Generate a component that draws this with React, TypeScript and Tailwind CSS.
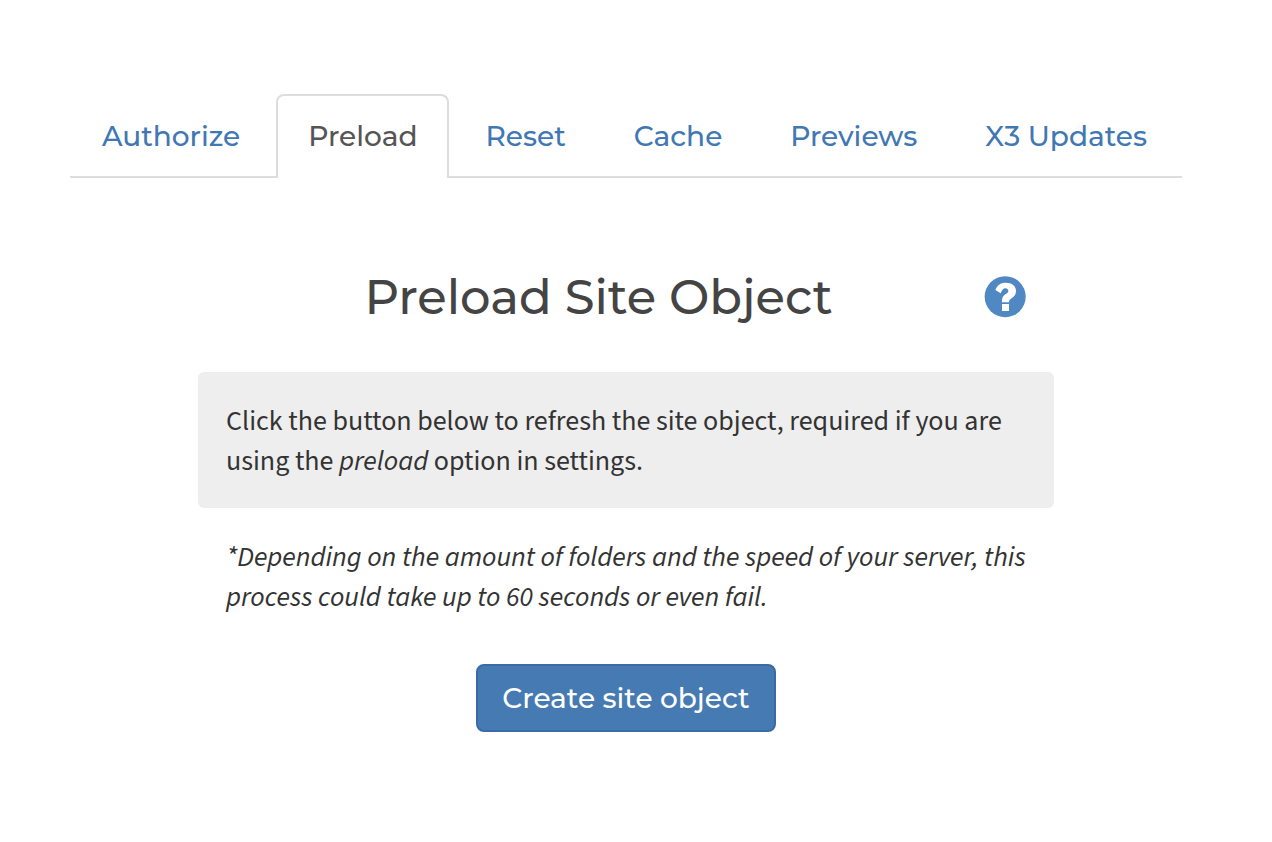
const heading = "font-['Montserrat','Inter',sans-serif]";
const body = "font-['Source_Sans_Pro','Source_Sans_3','Noto_Sans_CJK_SC',sans-serif]";

function HelpIcon() {
  return (
    <svg viewBox="-2 0 126 126" className="size-[42px]" aria-hidden="true">
      <circle cx="61.5" cy="62" r="61.5" fill="currentColor" />
      <path
        fill="#ffffff"
        d="M32 42C37 28 47 20 63 20C82 20 94 30 94 45C94 56 89 61 82 66C75 71 73 72 73 79H52C52 66 54 61 62 55C68 51 71 49 71 45C71 40 67 37 62 37C56 37 52 42 48 52ZM52 84H73V105H52Z"
      />
    </svg>
  );
}

function Tab({ label, active = false }: { label: string; active?: boolean }) {
  return (
    <li className="-mb-0.5">
      <a
        href="#"
        aria-current={active ? "page" : undefined}
        className={
          active
            ? "flex h-[84px] items-center rounded-t-lg border-2 border-b-0 border-[#dddddd] bg-white px-[30px] pb-0.5 text-[#555555]"
            : "flex h-[84px] items-center border-t-2 border-transparent px-8 pb-0.5 text-[#4177b3]"
        }
      >
        {label}
      </a>
    </li>
  );
}

export default function App() {
  return (
    <main className={`min-h-screen bg-white pt-[94px] pr-[90px] pb-16 pl-[70px] text-[#333333] ${body}`}>
      <nav aria-label="Panel sections" className={heading}>
        <ul className="flex gap-1 border-b-2 border-[#dddddd] text-[28px] leading-10 font-medium whitespace-nowrap">
          <Tab label="Authorize" />
          <Tab label="Preload" active />
          <Tab label="Reset" />
          <Tab label="Cache" />
          <Tab label="Previews" />
          <Tab label="X3 Updates" />
        </ul>
      </nav>
      <section className="mx-auto mt-[87px] max-w-[856px]">
        <header className="grid grid-cols-[1fr_auto] items-center pr-7 pl-[15px]">
          <h1 className={`text-center text-[48px] leading-[64px] font-medium text-[#444444] ${heading}`}>Preload Site Object</h1>
          <button type="button" aria-label="Help" className="text-[#5088c4]">
            <HelpIcon />
          </button>
        </header>
        <p className="mt-[43px] rounded-md bg-[#eeeeee] px-7 pt-[29px] pb-[27px] text-[28px] leading-10">
          Click the button below to refresh the site object, required if you are using the <em>preload</em> option in settings.
        </p>
        <p className="mt-[29px] px-7 text-[28px] leading-10 italic">
          *Depending on the amount of folders and the speed of your server, this process could take up to 60 seconds or even fail.
        </p>
        <button
          type="button"
          className={`mx-auto mt-[47px] block h-[68px] rounded-lg border-2 border-[#3b6ba2] bg-[#457ab3] px-6 text-[28px] font-medium text-white ${heading}`}
        >
          Create site object
        </button>
      </section>
    </main>
  );
}
